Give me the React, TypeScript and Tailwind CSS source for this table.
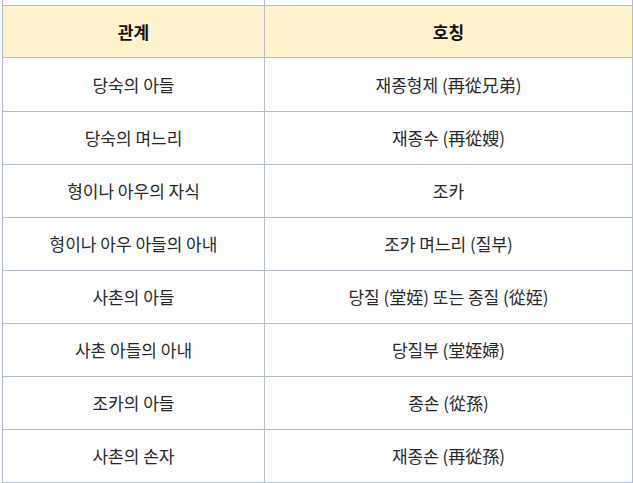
import React from "react";

const rows: [string, string][] = [
  ["당숙의 아들", "재종형제 (再從兄弟)"],
  ["당숙의 며느리", "재종수 (再從嫂)"],
  ["형이나 아우의 자식", "조카"],
  ["형이나 아우 아들의 아내", "조카 며느리 (질부)"],
  ["사촌의 아들", "당질 (堂姪) 또는 종질 (從姪)"],
  ["사촌 아들의 아내", "당질부 (堂姪婦)"],
  ["조카의 아들", "종손 (從孫)"],
  ["사촌의 손자", "재종손 (再從孫)"],
];

export default function App() {
  return (
    <div
      className="w-[633px] h-[483px] overflow-hidden bg-white text-[#2a2a2a]"
      style={{ fontFamily: '"Noto Sans CJK KR", "Noto Sans", sans-serif' }}
    >
      <div className="ml-[2px] w-[631px] border-l border-[#b3bdcb]">
        <div className="flex h-[5px]">
          <div className="w-[262px] border-r border-[#b3bdcb]" />
          <div className="w-[368px] border-r border-[#b3bdcb]" />
        </div>
        <div className="flex h-[53px] border-t border-b border-[#b3bdcb] bg-[#fff2cc] text-[17px] font-bold text-[#111]">
          <div className="w-[262px] border-r border-[#b3bdcb] flex items-center justify-center">관계</div>
          <div className="w-[368px] border-r border-[#b3bdcb] flex items-center justify-center">호칭</div>
        </div>
        {rows.map(([a, b], i) => (
          <div
            key={i}
            className={`flex border-b border-[#b3bdcb] text-[17px] ${i === 0 ? "h-[54px]" : "h-[53px]"}`}
          >
            <div className="w-[262px] border-r border-[#b3bdcb] flex items-center justify-center">{a}</div>
            <div className="w-[368px] border-r border-[#b3bdcb] flex items-center justify-center">{b}</div>
          </div>
        ))}
      </div>
    </div>
  );
}
